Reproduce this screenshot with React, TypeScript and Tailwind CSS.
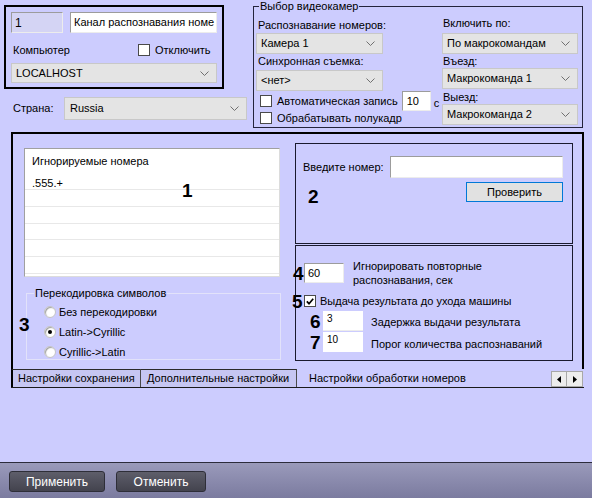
import React from "react";

const Chevron = () => (
  <svg width="9" height="5" viewBox="0 0 9 5" className="shrink-0">
    <polyline points="0.5,0.5 4.5,4.5 8.5,0.5" fill="none" stroke="#707070" strokeWidth="1" />
  </svg>
);

function Combo({ text, className }: { text: string; className: string }) {
  return (
    <div
      className={`flex items-center justify-between bg-[#e4e4e4] border border-[#c8c8c8] pl-[4px] pr-[7px] shrink-0 ${className}`}
    >
      <span className="whitespace-nowrap overflow-hidden">{text}</span>
      <Chevron />
    </div>
  );
}

function Check({ checked = false }: { checked?: boolean }) {
  return (
    <div className="w-[12px] h-[12px] bg-white border border-[#4a4a4a] flex items-center justify-center shrink-0">
      {checked && (
        <svg width="8" height="7" viewBox="0 0 8 7">
          <polyline points="0.8,3.4 3,5.7 7.2,0.8" fill="none" stroke="#000" strokeWidth="1.7" />
        </svg>
      )}
    </div>
  );
}

function Radio({ checked = false }: { checked?: boolean }) {
  return (
    <div className="w-[12px] h-[12px] rounded-full bg-white border border-[#c4c4c4] flex items-center justify-center shrink-0 shadow-[inset_1px_1px_1px_#a0a0a0]">
      {checked && <div className="w-[4px] h-[4px] rounded-full bg-black" />}
    </div>
  );
}

function Num({ n, className }: { n: string; className: string }) {
  return (
    <span className={`absolute text-[19px] leading-[19px] font-bold text-black ${className}`}>{n}</span>
  );
}

const sunken =
  "border border-t-[#9c9c9c] border-l-[#9c9c9c] border-r-[#ececec] border-b-[#ececec]";

export default function App() {
  return (
    <div className="w-[592px] h-[498px] bg-[#ccccfe] flex flex-col overflow-hidden font-['Liberation_Sans',Arial,sans-serif] text-[11px] text-black">
      {/* top area */}
      <div className="flex h-[128px] shrink-0">
        <div className="w-[253px] flex flex-col shrink-0">
          <div className="ml-[4px] mt-[5px] w-[220px] h-[84px] border-2 border-black pl-[5px] pt-[5px] flex flex-col">
            <div className="flex gap-[7px]">
              <div className={`w-[52px] h-[21px] bg-[#d4d4f4] ${sunken} pl-[3px] flex items-center text-[12px]`}>1</div>
              <div className={`w-[147px] h-[21px] bg-white ${sunken} pl-[3px] flex items-center overflow-hidden whitespace-nowrap text-[11px]`}>
                Канал распознавания номе
              </div>
            </div>
            <div className="mt-[10px] h-[14px] flex items-center">
              <span className="ml-[2px] w-[125px]">Компьютер</span>
              <Check />
              <span className="ml-[5px]">Отключить</span>
            </div>
            <Combo text="LOCALHOST" className="mt-[6px] w-[206px] h-[20px]" />
          </div>
          <div className="mt-[8px] flex items-center">
            <span className="ml-[13px] w-[51px]">Страна:</span>
            <Combo text="Russia" className="w-[183px] h-[23px] pl-[5px]" />
          </div>
        </div>

        <fieldset className="w-[330px] h-[128px] border border-[#24243c] shrink-0">
          <legend className="ml-[5px] px-[1px] leading-[12px]">Выбор видеокамер</legend>
          <div className="flex">
            <div className="w-[188px] pl-[2px] flex flex-col">
              <span className="mt-[6px] ml-[2px] h-[14px] leading-[14px]">Распознавание номеров:</span>
              <Combo text="Камера 1" className="mt-[1px] w-[127px] h-[21px]" />
              <span className="ml-[2px] h-[14px] leading-[14px]">Синхронная съемка:</span>
              <Combo text="<нет>" className="mt-[2px] w-[127px] h-[21px]" />
              <div className="h-[20px] flex items-center ml-[4px]">
                <Check />
                <span className="ml-[5px] whitespace-nowrap">Автоматическая запись</span>
                <div className={`ml-[4px] w-[29px] h-[20px] bg-white ${sunken} pl-[4px] flex items-center shrink-0`}>10</div>
                <span className="ml-[3px] mt-[4px]">с</span>
              </div>
              <div className="h-[14px] flex items-center ml-[4px]">
                <Check />
                <span className="ml-[5px] whitespace-nowrap">Обрабатывать полукадр</span>
              </div>
            </div>
            <div className="w-[136px] flex flex-col">
              <span className="mt-[4px] ml-[1px] h-[14px] leading-[14px]">Включить по:</span>
              <Combo text="По макрокомандам" className="mt-[3px] w-[136px] h-[21px]" />
              <span className="ml-[1px] h-[14px] leading-[14px]">Въезд:</span>
              <Combo text="Макрокоманда 1" className="w-[136px] h-[21px]" />
              <span className="mt-[1px] ml-[1px] h-[14px] leading-[14px]">Выезд:</span>
              <Combo text="Макрокоманда 2" className="w-[136px] h-[21px]" />
            </div>
          </div>
        </fieldset>
      </div>

      {/* main panel */}
      <div className="relative ml-[11px] mt-[4px] w-[573px] h-[237px] border-2 border-b-0 border-black flex shrink-0">
        <div className="w-[282px] flex flex-col shrink-0">
          <div className="ml-[11px] mt-[14px] w-[256px] h-[129px] bg-white border border-t-[#a0a0a0] border-l-[#a0a0a0] border-r-[#dcdcdc] border-b-[#dcdcdc] flex flex-col overflow-hidden">
            <div className="h-[24px] pl-[7px] flex items-center shrink-0">Игнорируемые номера</div>
            <div className="h-[17px] pl-[7px] pt-[3px] leading-[14px] border-b border-[#e8e8e8] shrink-0">.555.+</div>
            <div className="h-[17px] border-b border-[#e8e8e8] shrink-0" />
            <div className="h-[17px] border-b border-[#e8e8e8] shrink-0" />
            <div className="h-[16px] border-b border-[#e8e8e8] shrink-0" />
            <div className="h-[17px] border-b border-[#e8e8e8] shrink-0" />
            <div className="h-[17px] border-b border-[#e8e8e8] shrink-0" />
          </div>
          <fieldset className="ml-[13px] mt-[10px] w-[255px] h-[73px] border border-[#e2e2fa] pl-[17px]">
            <legend className="ml-[-10px] px-[1px] leading-[12px]">Перекодировка символов</legend>
            <div className="mt-[3px] h-[20px] flex items-center">
              <Radio />
              <span className="ml-[3px]">Без перекодировки</span>
            </div>
            <div className="h-[20px] flex items-center">
              <Radio checked />
              <span className="ml-[3px]">Latin-&gt;Cyrillic</span>
            </div>
            <div className="h-[20px] flex items-center">
              <Radio />
              <span className="ml-[3px]">Cyrillic-&gt;Latin</span>
            </div>
          </fieldset>
        </div>

        <div className="w-[278px] flex flex-col shrink-0">
          <div className="mt-[9px] h-[101px] border border-[#1a1a2e] flex flex-col">
            <div className="mt-[12px] h-[22px] flex items-center">
              <span className="pl-[7px] w-[94px] whitespace-nowrap">Введите номер:</span>
              <div className={`w-[173px] h-[22px] bg-white ${sunken}`} />
            </div>
            <button className="mt-[4px] self-end mr-[9px] w-[97px] h-[20px] border border-[#0078d7] bg-[#e1e1e1] flex items-center justify-center">
              Проверить
            </button>
          </div>
          <div className="mt-[1px] h-[116px] border border-[#1a1a2e] flex flex-col">
            <div className="mt-[13px] flex items-start">
              <div className={`ml-[8px] mt-[4px] w-[40px] h-[20px] bg-white ${sunken} pl-[3px] flex items-center`}>60</div>
              <div className="ml-[9px] leading-[14px] flex flex-col">
                <span>Игнорировать повторные</span>
                <span>распознавания, сек</span>
              </div>
            </div>
            <div className="mt-[7px] h-[14px] flex items-center">
              <div className="ml-[8px]"><Check checked /></div>
              <span className="ml-[4px] whitespace-nowrap">Выдача результата до ухода машины</span>
            </div>
            <div className="mt-[3px] h-[20px] flex items-center">
              <div className="ml-[27px] w-[40px] h-[20px] bg-white pl-[4px] pt-[2px] text-[10px] leading-[12px] shrink-0 border-b border-[#ececec]">3</div>
              <span className="ml-[8px] pt-[2px] whitespace-nowrap">Задержка выдачи результата</span>
            </div>
            <div className="mt-[1px] h-[20px] flex items-center">
              <div className="ml-[27px] w-[40px] h-[20px] bg-white pl-[4px] pt-[2px] text-[10px] leading-[12px] shrink-0">10</div>
              <span className="ml-[8px] pt-[5px] whitespace-nowrap">Порог количества распознаваний</span>
            </div>
          </div>
        </div>

        <Num n="1" className="left-[169px] top-[47px]" />
        <Num n="2" className="left-[295px] top-[53px]" />
        <Num n="3" className="left-[6px] top-[181px]" />
        <Num n="4" className="left-[280px] top-[130px]" />
        <Num n="5" className="left-[279px] top-[158px]" />
        <Num n="6" className="left-[297px] top-[178px]" />
        <Num n="7" className="left-[297px] top-[199px]" />
      </div>

      {/* tabs */}
      <div className="ml-[11px] w-[573px] h-[19px] flex border-b border-[#1a1a1a] shrink-0">
        <div className="w-[130px] h-[18px] border-l-2 border-t border-r border-l-black border-t-[#2a2a2a] border-r-[#4a4a4a] bg-[#c6c6f2] pl-[5px] flex items-center whitespace-nowrap shrink-0">
          Настройки сохранения
        </div>
        <div className="w-[156px] h-[18px] border-t border-r border-t-[#2a2a2a] border-r-[#4a4a4a] bg-[#c6c6f2] pl-[6px] flex items-center whitespace-nowrap shrink-0">
          Дополнительные настройки
        </div>
        <div className="flex-1 pl-[12px] flex items-center whitespace-nowrap">Настройки обработки номеров</div>
        <div className="mt-[2px] mr-[1px] flex h-[16px] shrink-0">
          <div className="w-[16px] h-[16px] bg-[#ededed] border border-[#a8a8a8] flex items-center justify-center">
            <svg width="4" height="7" viewBox="0 0 4 7"><polygon points="4,0 0,3.5 4,7" fill="#000" /></svg>
          </div>
          <div className="w-[16px] h-[16px] bg-[#ededed] border border-l-0 border-[#a8a8a8] flex items-center justify-center">
            <svg width="4" height="7" viewBox="0 0 4 7"><polygon points="0,0 4,3.5 0,7" fill="#000" /></svg>
          </div>
        </div>
      </div>

      <div className="flex-1" />

      {/* bottom bar */}
      <div className="h-[36px] shrink-0 border-t border-[#2c2c3c] bg-gradient-to-b from-[#9a9abb] to-[#7b7b9f] flex items-start pl-[9px] pt-[8px] gap-[11px] text-[12px]">
        <button className="w-[96px] h-[21px] rounded-[3px] border border-[#2e2e38] bg-gradient-to-b from-[#5e5e6a] to-[#43434e] text-white flex items-center justify-center">
          Применить
        </button>
        <button className="w-[90px] h-[21px] rounded-[3px] border border-[#2e2e38] bg-gradient-to-b from-[#5e5e6a] to-[#43434e] text-white flex items-center justify-center">
          Отменить
        </button>
      </div>
    </div>
  );
}
